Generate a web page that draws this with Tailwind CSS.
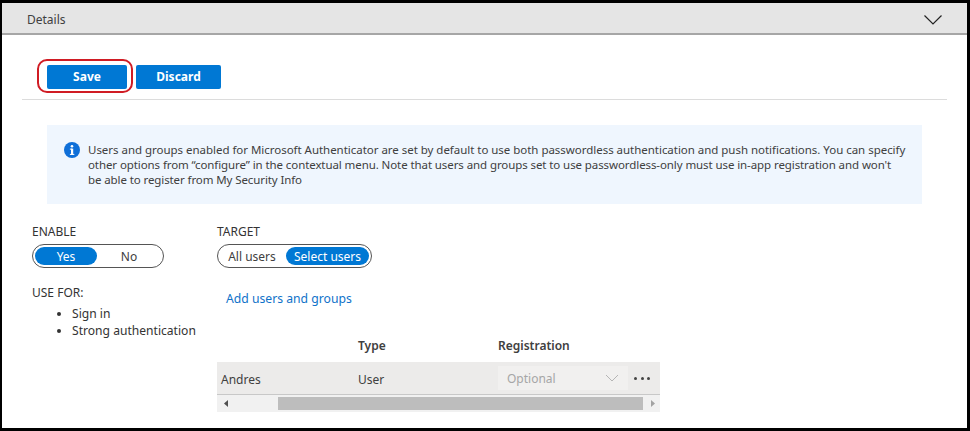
<!DOCTYPE html>
<html>
<head>
<meta charset="utf-8">
<script src="https://cdn.jsdelivr.net/npm/@tailwindcss/browser@4"></script>
</head>
<body class="bg-black overflow-hidden">
<div class="w-[970px] h-[431px] pt-[3px] pl-[2px] pr-[3px] pb-[3px] bg-black font-['Noto_Sans','Open_Sans',sans-serif] text-[#333333]">
  <div class="w-[965px] h-[425px] bg-white overflow-hidden flex flex-col">
    <div class="h-[32px] shrink-0 bg-[#e5e5e5] border-b-2 border-[#a6a6a6] flex items-center justify-between pt-[4px] pl-[25px] pr-[25px]">
      <span class="text-[12px] text-[#404040]">Details</span>
      <svg width="18" height="10" viewBox="0 0 18 10" fill="none" stroke="#222" stroke-width="1.2"><path d="M0.5 0.5L9 9L17.5 0.5"/></svg>
    </div>
    <div class="ml-[20px] mr-[20px] h-[65px] shrink-0 border-b border-[#dcdcdc] pl-[25px] pt-[30px] flex gap-[9px] items-start">
      <div class="relative w-[80px] h-[24px] bg-[#0078d4] rounded-[2px] text-white text-[12px] font-bold flex items-center justify-center">
        Save
        <div class="absolute left-[-10px] top-[-6px] w-[96px] h-[34px] border-2 border-[#d01c24] rounded-[10px]"></div>
      </div>
      <div class="w-[85px] h-[24px] bg-[#0078d4] rounded-[2px] text-white text-[12px] font-bold flex items-center justify-center">Discard</div>
    </div>
    <div class="ml-[45px] mt-[25px] w-[875px] h-[79px] shrink-0 bg-[#eff6fe] flex pl-[17px] pt-[17px]">
      <svg class="shrink-0" width="16" height="16" viewBox="0 0 16 16"><circle cx="8" cy="8" r="8" fill="#0f6fd8"/><rect x="7" y="6.6" width="2.2" height="6.2" fill="#fff"/><rect x="5.9" y="6.6" width="2" height="1" fill="#fff"/><rect x="5.9" y="11.9" width="4.4" height="1" fill="#fff"/><circle cx="8" cy="4.2" r="1.3" fill="#fff"/></svg>
      <p class="ml-[8px] text-[11.5px] leading-[15px] text-[#404040] whitespace-nowrap"><span class="tracking-[-0.03px]">Users and groups enabled for Microsoft Authenticator are set by default to use both passwordless authentication and push notifications. You can specify</span><br><span class="tracking-[-0.09px]">other options from “configure” in the contextual menu. Note that users and groups set to use passwordless-only must use in-app registration and won't</span><br><span class="tracking-[-0.1px]">be able to register from My Security Info</span></p>
    </div>
    <div class="flex pl-[30px] pt-[20px]">
      <div class="w-[185px] shrink-0">
        <div class="text-[12px] leading-[16px]">ENABLE</div>
        <div class="mt-[4px] w-[132px] h-[24px] rounded-full border border-[#555] flex items-center p-[2px] text-[12px]">
          <div class="w-[62px] h-[18px] rounded-full bg-[#0078d4] text-white flex items-center justify-center pt-[1px]">Yes</div>
          <div class="flex-1 text-center text-[#404040] pt-[1px]">No</div>
        </div>
        <div class="mt-[17px] text-[12px] leading-[16px]">USE FOR:</div>
        <ul class="mt-[4px] list-disc pl-[40px] text-[12.1px] leading-[17px]">
          <li>Sign in</li>
          <li class="whitespace-nowrap">Strong authentication</li>
        </ul>
      </div>
      <div class="w-[443px] shrink-0">
        <div class="text-[12px] leading-[16px]">TARGET</div>
        <div class="mt-[4px] w-[155px] h-[24px] rounded-full border border-[#555] flex items-center p-[2px] text-[12px]">
          <div class="w-[64px] text-center text-[#404040] pt-[1px]">All users</div>
          <div class="ml-[2px] flex-1 h-[18px] rounded-full bg-[#0078d4] text-white flex items-center justify-center pt-[1px]">Select users</div>
        </div>
        <a class="block mt-[23px] ml-[9px] text-[12.2px] leading-[16px] text-[#0f72c9]">Add users and groups</a>
        <div class="mt-[31px] flex h-[16px] text-[12px] font-semibold leading-[16px] text-[#404040]">
          <div class="w-[141px]"></div><div class="w-[140px]">Type</div><div>Registration</div>
        </div>
        <div class="mt-[8px] h-[33px] bg-[#ecebea] border-b border-[#c8c8c8] flex items-center text-[12px] text-[#404040]">
          <div class="w-[141px] pl-[4px] pt-[3px]">Andres</div>
          <div class="w-[140px] pt-[3px]">User</div>
          <div class="w-[130px] h-[24px] bg-[#f1f0ef] flex items-center justify-between pl-[9px] pr-[9px] text-[#a6a6a6]">
            <span class="pt-[1px]">Optional</span>
            <svg width="14" height="8" viewBox="0 0 14 8" fill="none" stroke="#b5b5b5"><path d="M1 1L7 7L13 1"/></svg>
          </div>
          <div class="ml-[6px] flex gap-[3.5px]">
            <span class="w-[3px] h-[3px] rounded-full bg-[#444]"></span>
            <span class="w-[3px] h-[3px] rounded-full bg-[#444]"></span>
            <span class="w-[3px] h-[3px] rounded-full bg-[#444]"></span>
          </div>
        </div>
        <div class="h-[17px] bg-[#f1f1f1] flex items-center">
          <svg class="ml-[7px] shrink-0" width="4" height="7" viewBox="0 0 4 7"><path d="M4 0V7L0 3.5Z" fill="#505050"/></svg>
          <div class="ml-[50px] w-[365px] h-[13px] bg-[#bdbdbd]"></div>
          <svg class="ml-[8px] shrink-0" width="4" height="7" viewBox="0 0 4 7"><path d="M0 0V7L4 3.5Z" fill="#a3a3a3"/></svg>
        </div>
      </div>
    </div>
  </div>
</div>
</body>
</html>
